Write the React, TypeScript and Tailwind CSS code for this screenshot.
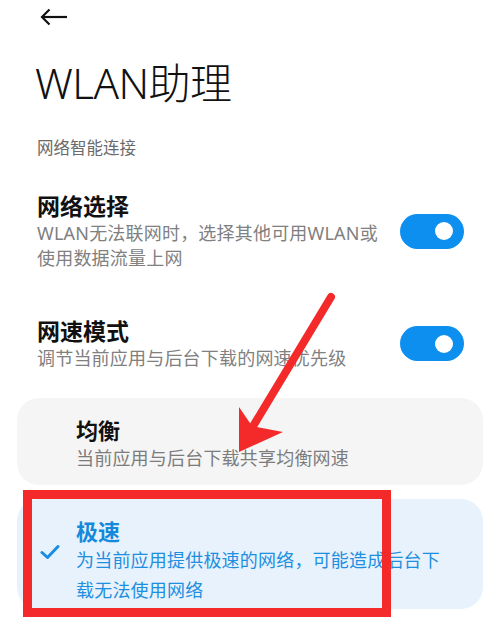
import React from 'react';

const FONT = '"Noto Sans", "Noto Sans CJK SC", sans-serif';

function Toggle() {
  return (
    <div className="relative w-[64px] h-[35px] rounded-full bg-[#0d8ff0] flex items-center justify-end pr-[11px] shrink-0">
      <div className="w-[18px] h-[18px] rounded-full bg-white" />
    </div>
  );
}

function SettingRow({ title, desc }: { title: string; desc: string }) {
  return (
    <div className="flex items-center justify-between pl-[37px] pr-[36px]">
      <div className="flex flex-col">
        <div className="text-[23px] leading-[30px] font-bold text-[#111]">{title}</div>
        <div className="text-[18px] leading-[25px] text-[#808080] w-[352px] tracking-[0.2px]">{desc}</div>
      </div>
      <Toggle />
    </div>
  );
}

export default function App() {
  return (
    <div
      className="relative w-[500px] h-[637px] bg-white overflow-hidden"
      style={{ fontFamily: FONT }}
    >
      {/* Header */}
      <div className="pl-[40px] pt-[8px] h-[30px]">
        <svg width="28" height="18" viewBox="0 0 28 18" fill="none" stroke="#111" strokeWidth="2.2">
          <path d="M27 9H2" />
          <path d="M9.5 1.5L2 9l7.5 7.5" />
        </svg>
      </div>
      <div className="pl-[35px] mt-[28px] text-[42px] leading-[50px] font-light text-[#111] tracking-[-0.5px]">
        WLAN助理
      </div>
      <div className="pl-[37px] mt-[29px] text-[16.5px] leading-[22px] text-[#6b6b6b]">网络智能连接</div>

      <div className="mt-[32px]">
        <SettingRow title="网络选择" desc="WLAN无法联网时，选择其他可用WLAN或使用数据流量上网" />
      </div>
      <div className="mt-[45px]">
        <SettingRow title="网速模式" desc="调节当前应用与后台下载的网速优先级" />
      </div>

      {/* Options */}
      <div className="mt-[27px] px-[17px] flex flex-col gap-[14px]">
        <div className="rounded-[22px] bg-[#f5f5f5] h-[87px] pl-[59px] pt-[18px]">
          <div className="text-[22px] leading-[28px] font-bold text-[#111]">均衡</div>
          <div className="text-[18px] leading-[28px] text-[#7c7c7c] tracking-[0.2px]">当前应用与后台下载共享均衡网速</div>
        </div>
        <div className="rounded-[22px] bg-[#e7f2fd] h-[110px] flex items-start pt-[18px]">
          <div className="w-[59px] flex justify-center pl-[6px] pt-[27px]">
            <svg width="20" height="16" viewBox="0 0 20 16" fill="none" stroke="#1a8de0" strokeWidth="3" strokeLinecap="round" strokeLinejoin="round">
              <path d="M2 8.5l5.5 5L18 2.5" />
            </svg>
          </div>
          <div className="flex flex-col">
            <div className="text-[22px] leading-[28px] font-bold text-[#1589dc]">极速</div>
            <div className="text-[18px] leading-[30px] text-[#1e8fdf] w-[372px] tracking-[0.2px]">
              为当前应用提供极速的网络，可能造成后台下载无法使用网络
            </div>
          </div>
        </div>
      </div>

      {/* Red annotations */}
      <div className="absolute left-[23px] top-[490px] w-[368px] h-[127px] border-[9px] border-[#f42a2a] pointer-events-none" />
      <svg className="absolute left-0 top-0 pointer-events-none" width="500" height="637" viewBox="0 0 500 637">
        <path d="M331 297L252 428" stroke="#f42a2a" strokeWidth="8" strokeLinecap="round" />
        <path d="M239 452L239 407L252 426L283 432Z" fill="#f42a2a" />
      </svg>
    </div>
  );
}
